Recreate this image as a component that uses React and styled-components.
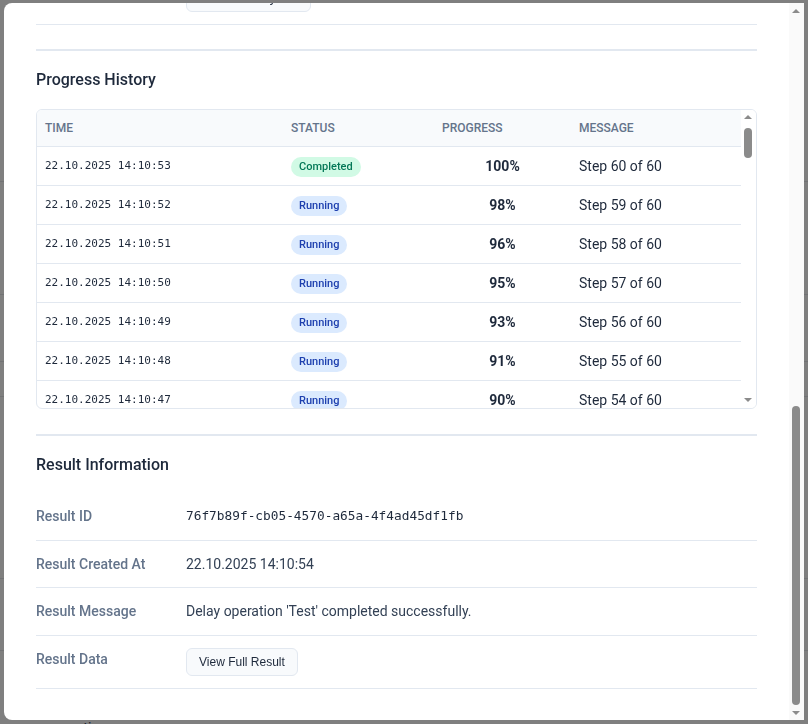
import React, { useLayoutEffect, useRef } from "react";
import styled, { createGlobalStyle } from "styled-components";

const GlobalStyle = createGlobalStyle`
  html, body {
    margin: 0;
    padding: 0;
  }
  body {
    font-family: Roboto, "Noto Sans", sans-serif;
    background: #fff;
    color: #1e293b;
    overflow: hidden;
  }
  * {
    box-sizing: border-box;
  }
`;

// data
const pad = (n) => String(n).padStart(2, "0");

const history = Array.from({ length: 60 }, (_, i) => {
  const step = 60 - i;
  const total = 10 * 60 + 53 - i;
  return {
    time: `22.10.2025 14:${pad(Math.floor(total / 60))}:${pad(total % 60)}`,
    status: step === 60 ? "Completed" : "Running",
    progress: Math.floor((step * 100) / 60),
    message: `Step ${step} of 60`,
  };
});

const jobInfo = [
  ["Job ID", "b3e1a9c2-7d44-4f0e-9a1b-52c8e0f3d7a1", true],
  ["Job Name", "Delay operation"],
  ["Job Type", "delay"],
  ["Status", "Completed"],
  ["Priority", "Normal"],
  ["Queue", "default"],
  ["Attempts", "1 of 3"],
  ["Created At", "22.10.2025 14:09:52"],
  ["Started At", "22.10.2025 14:09:53"],
  ["Finished At", "22.10.2025 14:10:54"],
  ["Duration", "1m 1s"],
];

const inputInfo = [
  ["Operation", "Test"],
  ["Delay", "60 seconds"],
];

const pageRows = [
  { h: 182, text: "" },
  { h: 113, text: "Delay operation" },
  { h: 67, text: "Import data" },
  { h: 35, text: "" },
  { h: 182, text: "Generate report" },
  { h: 72, text: "Cleanup" },
  { h: 90, text: "operation" },
];

// classic thin scrollbar, drawn (the real ones are hidden in this window)
function ScrollBar({ thumbTop, thumbHeight, $bg }) {
  return (
    <Track $bg={$bg}>
      <Arrow $up />
      <Rail>
        <Thumb style={{ marginTop: thumbTop, height: thumbHeight }} />
      </Rail>
      <Arrow />
    </Track>
  );
}

function DetailList({ rows }) {
  return rows.map(([label, value, mono]) => (
    <DetailRow key={label}>
      <Label>{label}</Label>
      {mono ? <MonoValue>{value}</MonoValue> : <Value>{value}</Value>}
    </DetailRow>
  ));
}

function App() {
  const bodyRef = useRef(null);

  // the dialog is scrolled all the way down
  useLayoutEffect(() => {
    const el = bodyRef.current;
    if (el) el.scrollTop = el.scrollHeight;
  }, []);

  return (
    <>
      <GlobalStyle />
      <Page>
        {pageRows.map((row, i) => (
          <PageRow key={i} $h={row.h}>
            <PageCell>{row.text}</PageCell>
          </PageRow>
        ))}
      </Page>

      <Overlay>
        <Modal>
          <ModalBody ref={bodyRef}>
            <ModalHeader>
              <ModalTitle>Job Details</ModalTitle>
              <CloseButton>×</CloseButton>
            </ModalHeader>

            <Section $first>
              <SectionTitle>Job Information</SectionTitle>
              <DetailList rows={jobInfo} />
            </Section>

            <Section>
              <SectionTitle>Input Data</SectionTitle>
              <DetailList rows={inputInfo} />
              <DetailRow>
                <Label>Payload</Label>
                <div>
                  <SmallButton>Show Full Payload</SmallButton>
                </div>
              </DetailRow>
            </Section>

            <Section $bottom={25}>
              <SectionTitle>Progress History</SectionTitle>
              <TableWrap>
                <TableScroll>
                  <Table>
                    <colgroup>
                      <col style={{ width: 246 }} />
                      <col style={{ width: 151 }} />
                      <col style={{ width: 137 }} />
                      <col />
                    </colgroup>
                    <thead>
                      <tr>
                        <Th>Time</Th>
                        <Th>Status</Th>
                        <Th>Progress</Th>
                        <Th>Message</Th>
                      </tr>
                    </thead>
                    <tbody>
                      {history.map((item) => (
                        <tr key={item.time}>
                          <TimeCell>{item.time}</TimeCell>
                          <Td>
                            <Badge $done={item.status === "Completed"}>{item.status}</Badge>
                          </Td>
                          <ProgressCell>{item.progress}%</ProgressCell>
                          <Td>{item.message}</Td>
                        </tr>
                      ))}
                    </tbody>
                  </Table>
                </TableScroll>
                <ScrollBar thumbTop={3} thumbHeight={30} $bg="#fff" />
              </TableWrap>
            </Section>

            <Section>
              <SectionTitle>Result Information</SectionTitle>
              <DetailRow>
                <Label>Result ID</Label>
                <MonoValue>76f7b89f-cb05-4570-a65a-4f4ad45df1fb</MonoValue>
              </DetailRow>
              <DetailRow>
                <Label>Result Created At</Label>
                <Value>22.10.2025 14:10:54</Value>
              </DetailRow>
              <DetailRow>
                <Label>Result Message</Label>
                <Value>Delay operation 'Test' completed successfully.</Value>
              </DetailRow>
              <DetailRow>
                <Label>Result Data</Label>
                <div>
                  <SmallButton>View Full Result</SmallButton>
                </div>
              </DetailRow>
            </Section>
          </ModalBody>
          <ScrollBar thumbTop={388} thumbHeight={299} $bg="#fafafa" />
        </Modal>
      </Overlay>
    </>
  );
}

export default App;

// background page under the overlay
const Page = styled.div`
  width: 808px;
  height: 724px;
  overflow: hidden;
`;
const PageRow = styled.div`
  height: ${(p) => p.$h}px;
  border-bottom: 1px solid #e5e7eb;
  display: flex;
  align-items: flex-end;
`;
const PageCell = styled.div`
  padding: 0 0 4px 48px;
  font-size: 14px;
  color: #334155;
`;

// scrollbar parts
const Track = styled.div`
  flex: 0 0 15px;
  display: flex;
  flex-direction: column;
  background: ${(p) => p.$bg};
`;
const Rail = styled.div`
  flex: 1;
  min-height: 0;
  padding-left: 3px;
`;
const Thumb = styled.div`
  width: 8px;
  border-radius: 4px;
  background: #8b8b8b;
`;
const Arrow = styled.div`
  flex: 0 0 15px;
  display: flex;
  align-items: center;
  justify-content: center;
  padding-right: 1px;
  &::before {
    content: "";
    border-left: 4px solid transparent;
    border-right: 4px solid transparent;
    ${(p) => (p.$up ? "border-bottom" : "border-top")}: 4px solid #8b8b8b;
  }
`;

// dialog
const Overlay = styled.div`
  position: fixed;
  inset: 0;
  background: rgba(0, 0, 0, 0.5);
  display: flex;
  justify-content: center;
  align-items: flex-start;
  padding-top: 3px;
`;
const Modal = styled.div`
  width: 800px;
  height: 717px;
  display: flex;
  background: #fff;
  border-radius: 8px 0 0 8px;
  overflow: hidden;
`;
const ModalBody = styled.div`
  flex: 1;
  min-width: 0;
  overflow-y: auto;
  scrollbar-width: none;
  padding: 24px 32px 7px;
`;
const ModalHeader = styled.div`
  display: flex;
  align-items: center;
  justify-content: space-between;
  padding-bottom: 16px;
`;
const ModalTitle = styled.h2`
  margin: 0;
  font-size: 20px;
  font-weight: 500;
  color: #0f172a;
`;
const CloseButton = styled.button`
  border: none;
  background: none;
  font-size: 24px;
  color: #64748b;
  cursor: pointer;
`;
const Section = styled.section`
  border-top: ${(p) => (p.$first ? "none" : "2px solid #e2e8f0")};
  padding: 16px 0 ${(p) => p.$bottom || 24}px;
`;
const SectionTitle = styled.h3`
  margin: 0 0 16px;
  font-size: 16px;
  line-height: 1.6;
  font-weight: 500;
  color: #1e293b;
`;
const DetailRow = styled.div`
  display: grid;
  grid-template-columns: 150px 1fr;
  align-items: start;
  padding: 12px 0;
  border-bottom: 1px solid #e2e8f0;
`;
const Label = styled.div`
  font-size: 14px;
  line-height: 1.6;
  font-weight: 500;
  color: #64748b;
`;
const Value = styled.div`
  font-size: 14px;
  line-height: 1.6;
  color: #334155;
`;
const MonoValue = styled.div`
  font-family: "DejaVu Sans Mono", "Liberation Mono", monospace;
  font-size: 12.8px;
  line-height: 22.4px;
  color: #1e293b;
`;
const SmallButton = styled.button`
  height: 28px;
  padding: 0 12px;
  font-family: "Liberation Sans", Arial, sans-serif;
  font-size: 12px;
  color: #1e293b;
  background: #f8fafc;
  border: 1px solid #e2e8f0;
  border-radius: 6px;
  cursor: pointer;
`;

// progress table
const TableWrap = styled.div`
  height: 300px;
  display: flex;
  border: 1px solid #e2e8f0;
  border-radius: 6px;
  overflow: hidden;
`;
const TableScroll = styled.div`
  flex: 1;
  min-width: 0;
  overflow-y: auto;
  scrollbar-width: none;
`;
const Table = styled.table`
  width: 100%;
  table-layout: fixed;
  border-collapse: separate;
  border-spacing: 0;
`;
const Th = styled.th`
  position: sticky;
  top: 0;
  height: 37px;
  padding: 0 8px;
  text-align: left;
  font-size: 12px;
  font-weight: 500;
  text-transform: uppercase;
  color: #64748b;
  background: #f8fafc;
  border-bottom: 1px solid #e2e8f0;
`;
const Td = styled.td`
  height: 39px;
  padding: 0 8px;
  font-size: 14px;
  color: #1e293b;
  border-bottom: 1px solid #e2e8f0;
  white-space: nowrap;
`;
const TimeCell = styled(Td)`
  font-family: "DejaVu Sans Mono", "Liberation Mono", monospace;
  font-size: 11px;
`;
const ProgressCell = styled(Td)`
  text-align: center;
  font-weight: 700;
`;
const Badge = styled.span`
  display: inline-block;
  margin-top: 2px;
  padding: 2px 8px;
  border-radius: 999px;
  font-size: 11px;
  font-weight: 500;
  line-height: 16px;
  background: ${(p) => (p.$done ? "#d1fae5" : "#dbeafe")};
  color: ${(p) => (p.$done ? "#047857" : "#1e40af")};
`;
